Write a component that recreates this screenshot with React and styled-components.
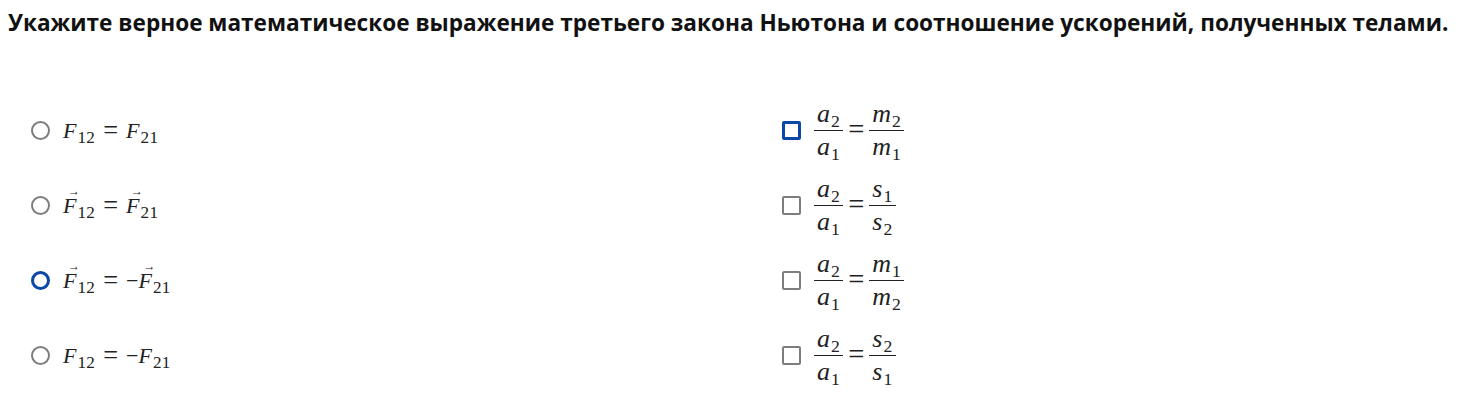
import React from 'react';
import styled, { createGlobalStyle } from 'styled-components';

const GlobalStyle = createGlobalStyle`
  body {
    margin: 8px;
    background: #fff;
    color: #000;
    font-family: "Open Sans", "Liberation Sans", sans-serif;
  }
`;

const Title = styled.h1`
  margin: 0;
  font-size: 22.6px;
  font-weight: 700;
  line-height: 30px;
  color: #111;
  white-space: nowrap;
`;

const Options = styled.div`
  display: grid;
  grid-template-columns: 751px 1fr;
  grid-auto-flow: column;
  grid-template-rows: repeat(4, 75px);
  margin-top: 55px;
  padding-left: 23px;
`;

const Option = styled.label`
  display: flex;
  align-items: center;
  gap: 13px;
  height: 75px;
`;

const Radio = styled.span`
  box-sizing: border-box;
  width: 19px;
  height: 19px;
  border-radius: 50%;
  border: ${p => (p.checked ? '3px solid #0b47a8' : '2.5px solid #7d7d7d')};
  flex-shrink: 0;
`;

const Check = styled.span`
  box-sizing: border-box;
  width: 19px;
  height: 19px;
  border-radius: 2px;
  border: ${p => (p.checked ? '3px solid #0b47a8' : '2.5px solid #7d7d7d')};
  flex-shrink: 0;
`;

const Math = styled.span`
  font-family: "Liberation Serif", "DejaVu Serif", serif;
  font-size: ${p => p.size || 22}px;
  color: #222;
  display: inline-flex;
  align-items: center;
  white-space: nowrap;
`;

const I = styled.i`
  font-style: italic;
`;

const Sub = styled.sub`
  font-size: ${p => p.scale || 0.68}em;
  font-style: normal;
  vertical-align: -0.3em;
  line-height: 0;
  margin-left: 1px;
  letter-spacing: 0.3px;
`;

const Op = styled.span`
  font-size: ${p => p.scale || 1.15}em;
  line-height: 1;
  margin: 0 ${p => p.gap || 6}px;
`;

const Vec = styled.span`
  position: relative;
  display: inline-block;
  font-style: italic;
  &::before {
    content: '→';
    position: absolute;
    font-style: normal;
    font-size: 12px;
    top: -9px;
    left: 5px;
  }
`;

const Frac = styled.span`
  display: inline-flex;
  flex-direction: column;
  align-items: stretch;
  text-align: center;
  line-height: 24px;
`;

const Num = styled.span`
  border-bottom: 1.5px solid #222;
  padding: 0 3px 4px;
`;

const Den = styled.span`
  padding: 4px 3px 0;
`;

const Var = ({ v, s, vec, scale }) => (
  <span>
    {vec ? <Vec>{v}</Vec> : <I>{v}</I>}
    <Sub scale={scale}>{s}</Sub>
  </span>
);

const Fraction = ({ n, d }) => (
  <Frac>
    <Num><Var v={n[0]} s={n[1]} /></Num>
    <Den><Var v={d[0]} s={d[1]} /></Den>
  </Frac>
);

const left = [
  { vec: false, minus: false },
  { vec: true, minus: false },
  { vec: true, minus: true, checked: true },
  { vec: false, minus: true },
];

const right = [
  { r: [['m', '2'], ['m', '1']], checked: true },
  { r: [['s', '1'], ['s', '2']] },
  { r: [['m', '1'], ['m', '2']] },
  { r: [['s', '2'], ['s', '1']] },
];

export default function App() {
  return (
    <>
      <GlobalStyle />
      <Title>
        Укажите верное математическое выражение третьего закона Ньютона и соотношение ускорений, полученных телами.
      </Title>
      <Options>
        {left.map((o, i) => (
          <Option key={'l' + i}>
            <Radio checked={o.checked} />
            <Math size={22}>
              <Var v="F" s="12" vec={o.vec} scale={0.78} />
              <Op gap={8} scale={1.2}>=</Op>
              {o.minus && '−'}
              <Var v="F" s="21" vec={o.vec} scale={0.78} />
            </Math>
          </Option>
        ))}
        {right.map((o, i) => (
          <Option key={'r' + i}>
            <Check checked={o.checked} />
            <Math size={26}>
              <Fraction n={['a', '2']} d={['a', '1']} />
              <Op gap={5} scale={1.1}>=</Op>
              <Fraction n={o.r[0]} d={o.r[1]} />
            </Math>
          </Option>
        ))}
      </Options>
    </>
  );
}
